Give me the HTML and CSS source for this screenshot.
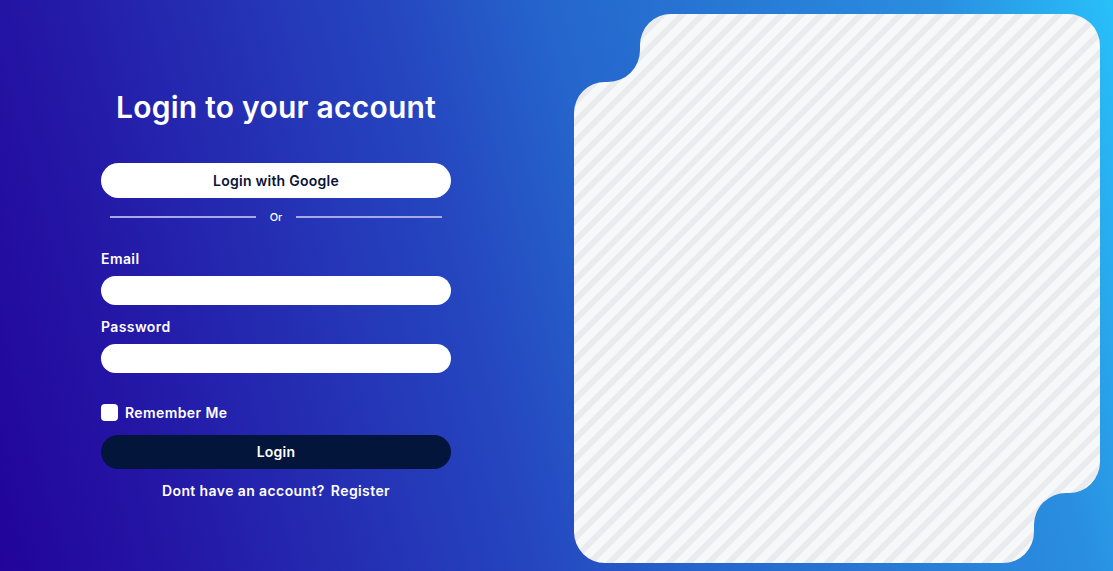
FILE: index.html
```html
<!DOCTYPE html>
<html lang="en">
<head>
<meta charset="utf-8">
<title>Login</title>
<link rel="stylesheet" href="styles.css">
</head>
<body>
<main class="page">
  <section class="left">
    <h1 class="title">Login to your account</h1>
    <button class="btn btn-google" type="button">Login with Google</button>
    <div class="divider"><span class="line"></span><span class="or">Or</span><span class="line"></span></div>
    <label class="label label-email" for="email">Email</label>
    <input class="input" id="email" type="email">
    <label class="label label-pass" for="pass">Password</label>
    <input class="input" id="pass" type="password">
    <div class="remember"><span class="check"></span><span class="remember-text">Remember Me</span></div>
    <button class="btn btn-login" type="button">Login</button>
    <p class="register">Dont have an account?<span class="register-link">Register</span></p>
  </section>
  <section class="right">
    <svg class="shape" width="526" height="549" viewBox="574 14 526 549" xmlns="http://www.w3.org/2000/svg">
      <defs>
        <pattern id="stripes" width="14" height="14" patternUnits="userSpaceOnUse" patternTransform="rotate(45)">
          <rect width="14" height="14" fill="#f7f8fa"/>
          <rect width="6" height="14" fill="#eaebee"/>
        </pattern>
      </defs>
      <path fill="url(#stripes)" d="M 670 14 H 1068 A 32 32 0 0 1 1100 46 V 462 A 31 31 0 0 1 1069 493 H 1066 A 32 32 0 0 0 1034 525 V 532 A 31 31 0 0 1 1003 563 H 605 A 31 31 0 0 1 574 532 V 113 A 31 31 0 0 1 605 82 H 608 A 32 32 0 0 0 640 50 V 45 A 31 31 0 0 1 671 14 Z"/>
    </svg>
  </section>
</main>
</body>
</html>
```
FILE: styles.css
```css
* { box-sizing: border-box; }
html, body { margin: 0; padding: 0; }
body {
  width: 1113px;
  height: 571px;
  overflow: hidden;
  font-family: Inter, "Noto Sans", sans-serif;
  background: linear-gradient(75deg, #22049a 0%, #2416a6 14%, #2547c0 43%, #2565cc 55%, #2a8ee0 86%, #28c0fa 100%);
}
.page {
  display: grid;
  grid-template-columns: 552px 1fr;
  height: 571px;
}
.left {
  display: flex;
  flex-direction: column;
  align-items: stretch;
  padding: 87px 101px 0 101px;
  color: #fff;
}
.title {
  margin: 0;
  font-size: 30px;
  line-height: 40px;
  font-weight: 600;
  text-align: center;
  letter-spacing: 0.25px;
}
.btn {
  display: block;
  width: 100%;
  border: 0;
  border-radius: 18px;
  font-family: inherit;
  font-weight: 600;
  font-size: 14px;
  letter-spacing: 0.25px;
  padding: 0;
}
.btn-google {
  margin-top: 36px;
  height: 35px;
  background: #fff;
  color: #0b1236;
  padding-bottom: 1px;
}
.divider {
  margin-top: 12px;
  height: 14px;
  display: flex;
  align-items: center;
  padding: 0 9px;
  gap: 12px;
}
.line {
  flex: 1;
  height: 2px;
  background: #a9a8e6;
}
.or {
  width: 16px;
  text-align: center;
  font-size: 11px;
  font-weight: 500;
}
.label {
  display: block;
  font-size: 14px;
  line-height: 20px;
  font-weight: 600;
  letter-spacing: 0.4px;
}
.label-email { margin-top: 25px; }
.label-pass { margin-top: 12px; }
.input {
  margin-top: 7px;
  height: 29px;
  width: 100%;
  border: 0;
  border-radius: 15px;
  background: #fff;
  outline: none;
}
.remember {
  margin-top: 31px;
  height: 17px;
  display: flex;
  align-items: center;
  gap: 7px;
}
.check {
  width: 17px;
  height: 17px;
  border-radius: 4px;
  background: #fff;
}
.remember-text {
  font-size: 14px;
  font-weight: 600;
  letter-spacing: 0.4px;
}
.btn-login {
  margin-top: 14px;
  height: 34px;
  background: #03153a;
  color: #fff;
  padding-bottom: 1px;
}
.register {
  margin: 12px 0 0;
  font-size: 14px;
  line-height: 20px;
  font-weight: 600;
  letter-spacing: 0.4px;
  text-align: center;
}
.register-link { margin-left: 6px; }
.right {
  padding: 14px 13px 8px 22px;
}
.shape { display: block; }
```
